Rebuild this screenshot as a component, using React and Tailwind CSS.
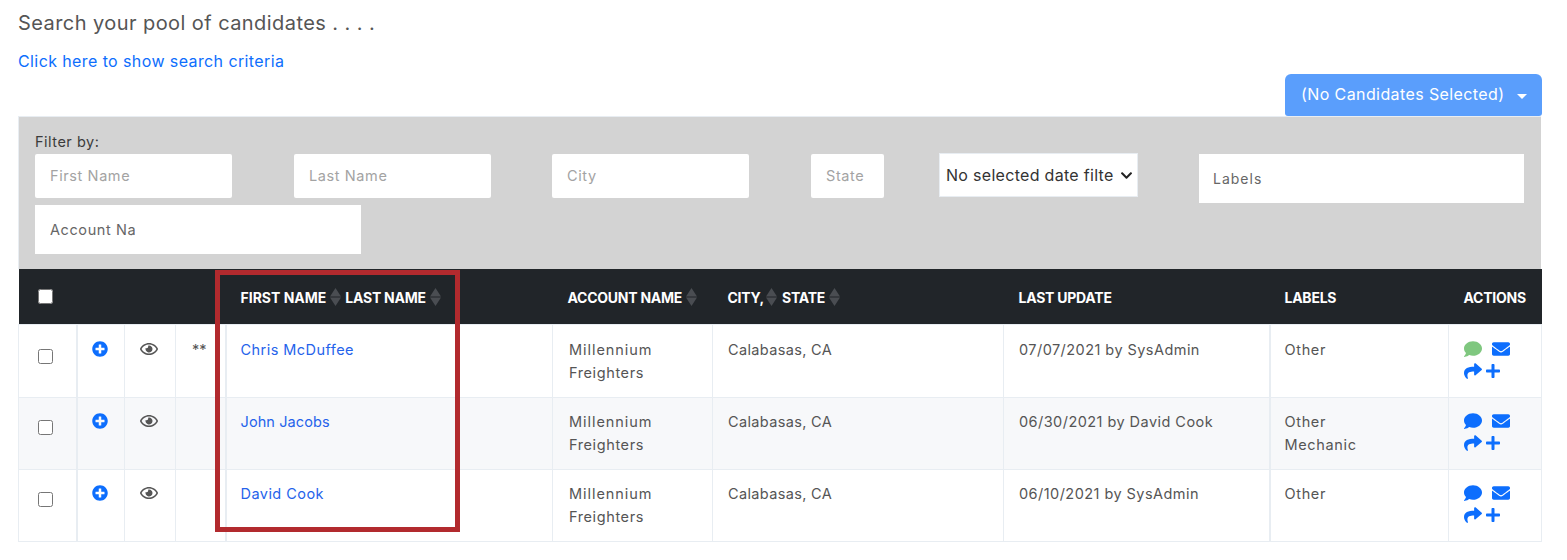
import React from 'react';
import { FaPlusCircle, FaRegEye, FaComment, FaEnvelope, FaShare, FaPlus, FaChevronDown } from 'react-icons/fa';

const rows = [
    { name: 'Chris McDuffee', nameClass: 'tracking-[0.45px]', stars: '**', update: '07/07/2021 by SysAdmin', labels: ['Other'], commentClass: 'text-[#7fc77f]', h: 'h-[73px]', check: 'pt-[24px]', text: 'pt-[13px]', icon: 'pt-[16px]' },
    { name: 'John Jacobs', nameClass: 'tracking-[0.1px]', stars: '', update: '06/30/2021 by David Cook', labels: ['Other', 'Mechanic'], commentClass: 'text-[#0d6efd]', h: 'h-[72px]', check: 'pt-[22px]', text: 'pt-[12px]', icon: 'pt-[15px]' },
    { name: 'David Cook', nameClass: 'tracking-[0.45px]', stars: '', update: '06/10/2021 by SysAdmin', labels: ['Other'], commentClass: 'text-[#0d6efd]', h: 'h-[72px]', check: 'pt-[22px]', text: 'pt-[12px]', icon: 'pt-[15px]' },
];

function SortIcon({ className = '' }) {
    return (
        <svg viewBox="0 0 11 18" className={`w-[11px] h-[18px] shrink-0 ${className}`} fill="#4a4d52">
            <polygon points="5.5,0 11,8.5 0,8.5" />
            <polygon points="0,9.5 11,9.5 5.5,18" />
        </svg>
    );
}

const inputClass = 'h-[44px] px-[15px] pb-[2px] bg-white rounded-[2px] text-[14.5px] tracking-[0.6px] placeholder:text-[#a3a3a3] outline-none';
const cellClass = 'border border-[#e8edf2] align-top';

export default function App() {
    return (
        <div className="relative w-[1567px] h-[560px] overflow-hidden bg-white pl-[18px] pr-[25px] font-['Inter',sans-serif] text-[#555]">
            <h4 className="pt-[9px] h-[47px] text-[20px] leading-[28px] tracking-[0.43px] text-[#555] font-normal">
                Search your pool of candidates . . . .
            </h4>
            <a href="#" className="block h-[27px] text-[16px] leading-[28px] tracking-[0.4px] text-[#0d6efd]">
                Click here to show search criteria
            </a>

            <div className="flex justify-end">
                <button className="w-[257px] h-[42px] pl-[16px] pb-[2px] flex items-center bg-[#5a9efc] text-white text-[16px] tracking-[0.4px] rounded-t-[6px] rounded-b-[3px]">
                    <span>(No Candidates Selected)</span>
                    <span className="ml-[12px] mt-[4px] border-x-[5px] border-x-transparent border-t-[5px] border-t-white" />
                </button>
            </div>

            <div className="h-[153px] mr-[1px] bg-[#d3d3d3] border-l border-t border-[#e8edf2] pl-[16px] pt-[16px]">
                <div className="h-[21px] text-[14.5px] leading-[18px] tracking-[0.5px] text-[#3b3b3b]">Filter by:</div>
                <div className="flex flex-wrap items-start">
                    <input placeholder="First Name" className={`${inputClass} w-[197px] mr-[62px]`} />
                    <input placeholder="Last Name" className={`${inputClass} w-[197px] mr-[61px]`} />
                    <input placeholder="City" className={`${inputClass} w-[197px] mr-[62px]`} />
                    <input placeholder="State" className={`${inputClass} w-[73px] mr-[55px]`} />
                    <div className="relative w-[199px] h-[44px] -mt-[1px] mr-[61px]">
                        <select className="appearance-none w-full h-full pl-[6px] pr-[23px] bg-white border border-[#e8edf2] text-[16px] tracking-[0.3px] text-[#333]">
                            <option>No selected date filter</option>
                        </select>
                        <FaChevronDown className="absolute right-[5px] top-[16px] w-[13px] h-[13px] text-[#222] pointer-events-none" />
                    </div>
                    <div className="w-[325px] h-[49px] bg-white flex items-center pl-[14px] pb-[1px]">
                        <input placeholder="Labels" className="w-[60px] text-[14px] tracking-[1px] placeholder:text-[#666] outline-none" />
                    </div>
                    <div className="w-[326px] h-[49px] mt-[2px] bg-white flex items-center pl-[15px]">
                        <input placeholder="Account Name" className="w-[85px] text-[14.5px] tracking-[0.6px] placeholder:text-[#666] outline-none" />
                    </div>
                </div>
            </div>

            <table className="w-[1523px] table-fixed border-collapse text-[14.5px] tracking-[0.45px]">
                <colgroup>
                    <col className="w-[58px]" />
                    <col className="w-[48px]" />
                    <col className="w-[51px]" />
                    <col className="w-[50px]" />
                    <col className="w-[327px]" />
                    <col className="w-[160px]" />
                    <col className="w-[291px]" />
                    <col className="w-[266px]" />
                    <col className="w-[179px]" />
                    <col className="w-[93px]" />
                </colgroup>
                <thead>
                    <tr className="h-[55px] bg-[#212529] text-white text-[14px] font-bold tracking-[-0.25px] text-left">
                        <th className="pl-[19px] pt-[2px]">
                            <input type="checkbox" className="block w-[15px] h-[15px] -mt-[2px]" />
                        </th>
                        <th />
                        <th />
                        <th />
                        <th className="pl-[15px] pt-[2px]">
                            <div className="flex items-center whitespace-nowrap">
                                <span className="tracking-normal">FIRST NAME</span>
                                <SortIcon className="ml-[4px] mr-[4px]" />
                                <span>LAST NAME</span>
                                <SortIcon className="ml-[4px]" />
                            </div>
                        </th>
                        <th className="pl-[15px] pt-[2px]">
                            <div className="flex items-center whitespace-nowrap">
                                <span>ACCOUNT NAME</span>
                                <SortIcon className="ml-[4px]" />
                            </div>
                        </th>
                        <th className="pl-[15px] pt-[2px]">
                            <div className="flex items-center whitespace-nowrap">
                                <span>CITY,</span>
                                <SortIcon className="ml-[2px] mr-[5px]" />
                                <span>STATE</span>
                                <SortIcon className="ml-[4px]" />
                            </div>
                        </th>
                        <th className="pl-[15px] pt-[2px]">LAST UPDATE</th>
                        <th className="pl-[15px] pt-[2px]">LABELS</th>
                        <th className="pl-[15px] pt-[2px]">ACTIONS</th>
                    </tr>
                </thead>
                <tbody>
                    {rows.map((row, i) => (
                        <tr key={row.name} className={`${row.h} ${i === 1 ? 'bg-[#f7f8fa]' : 'bg-white'} leading-[23px]`}>
                            <td className={`${cellClass} ${row.check} pl-[19px] border-r-2`}>
                                <input type="checkbox" className="block w-[15px] h-[15px]" />
                            </td>
                            <td className={`${cellClass} ${row.icon} pl-[14px]`}>
                                <FaPlusCircle className="text-[#0d6efd] w-[16px] h-[16px]" />
                            </td>
                            <td className={`${cellClass} ${row.icon} pl-[15px]`}>
                                <FaRegEye className="text-[#555] w-[18px] h-[16px]" />
                            </td>
                            <td className={`${cellClass} ${row.text} pl-[16px] tracking-normal border-r-2`}>{row.stars}</td>
                            <td className={`${cellClass} ${row.text} pl-[14px]`}>
                                <a href="#" className={`${row.nameClass} text-[#2563eb]`}>{row.name}</a>
                            </td>
                            <td className={`${cellClass} ${row.text} pl-[16px]`}>
                                <span className="tracking-[0.95px]">Millennium</span><br />
                                <span className="tracking-[0.6px]">Freighters</span>
                            </td>
                            <td className={`${cellClass} ${row.text} pl-[15px] tracking-[0.35px]`}>Calabasas, CA</td>
                            <td className={`${cellClass} ${row.text} pl-[15px] border-r-2`}>{row.update}</td>
                            <td className={`${cellClass} ${row.text} pl-[14px] tracking-[0.65px]`}>
                                {row.labels.map((label) => <div key={label}>{label}</div>)}
                            </td>
                            <td className={`${cellClass} ${row.icon} pl-[15px]`}>
                                <div className="flex items-center gap-[10px] -mt-[1px] text-[#0d6efd]">
                                    <FaComment className={`${row.commentClass} w-[18px] h-[18px]`} />
                                    <FaEnvelope className="w-[18px] h-[18px]" />
                                </div>
                                <div className="flex items-center gap-[3px] mt-[4px] text-[#0d6efd]">
                                    <FaShare className="w-[18px] h-[18px]" />
                                    <FaPlus className="w-[16px] h-[16px]" />
                                </div>
                            </td>
                        </tr>
                    ))}
                </tbody>
            </table>

            {/* annotation box drawn over the name column */}
            <div className="absolute left-[215px] top-[270px] w-[245px] h-[262px] border-[5px] border-[#b22a2e] pointer-events-none" />
        </div>
    );
}
